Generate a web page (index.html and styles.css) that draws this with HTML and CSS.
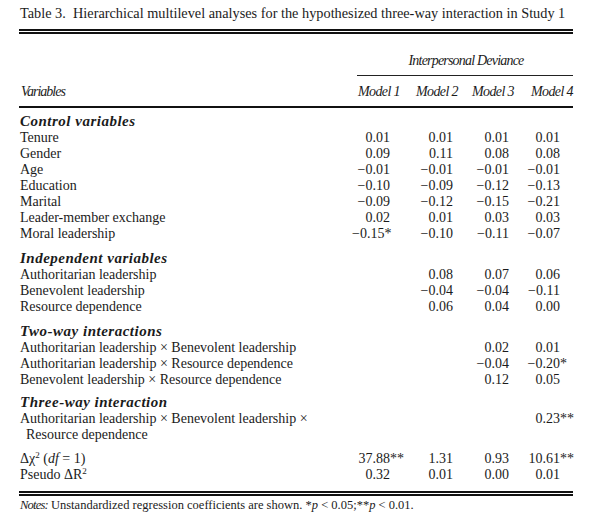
FILE: index.html
```html
<!DOCTYPE html>
<html>
<head>
<meta charset="utf-8">
<link rel="stylesheet" href="styles.css">
</head>
<body>
<div class="page">
  <div class="caption">Table 3.&nbsp; Hierarchical multilevel analyses for the hypothesized three-way interaction in Study 1</div>
  <div class="rule-double"></div>

  <div class="thead">
    <div class="cols spanrow">
      <div></div>
      <div class="spanner"><span>Interpersonal Deviance</span></div>
    </div>
    <div class="cols headrow">
      <div class="vars">Variables</div>
      <div class="mh">Model 1</div>
      <div class="mh">Model 2</div>
      <div class="mh">Model 3</div>
      <div class="mh">Model 4</div>
    </div>
  </div>

  <div class="tbody">
    <div class="group first">
      <div class="gh">Control variables</div>
      <div class="cols row"><div class="lab">Tenure</div><div class="n c1">0.01</div><div class="n c2">0.01</div><div class="n c3">0.01</div><div class="n c4">0.01</div></div>
      <div class="cols row"><div class="lab">Gender</div><div class="n c1">0.09</div><div class="n c2">0.11</div><div class="n c3">0.08</div><div class="n c4">0.08</div></div>
      <div class="cols row"><div class="lab">Age</div><div class="n c1">&minus;0.01</div><div class="n c2">&minus;0.01</div><div class="n c3">&minus;0.01</div><div class="n c4">&minus;0.01</div></div>
      <div class="cols row"><div class="lab">Education</div><div class="n c1">&minus;0.10</div><div class="n c2">&minus;0.09</div><div class="n c3">&minus;0.12</div><div class="n c4">&minus;0.13</div></div>
      <div class="cols row"><div class="lab">Marital</div><div class="n c1">&minus;0.09</div><div class="n c2">&minus;0.12</div><div class="n c3">&minus;0.15</div><div class="n c4">&minus;0.21</div></div>
      <div class="cols row"><div class="lab">Leader-member exchange</div><div class="n c1">0.02</div><div class="n c2">0.01</div><div class="n c3">0.03</div><div class="n c4">0.03</div></div>
      <div class="cols row"><div class="lab">Moral leadership</div><div class="n c1 tight">&minus;0.15<span class="sig">*</span></div><div class="n c2">&minus;0.10</div><div class="n c3">&minus;0.11</div><div class="n c4">&minus;0.07</div></div>
    </div>

    <div class="group">
      <div class="gh">Independent variables</div>
      <div class="cols row"><div class="lab">Authoritarian leadership</div><div class="n c1"></div><div class="n c2">0.08</div><div class="n c3">0.07</div><div class="n c4">0.06</div></div>
      <div class="cols row"><div class="lab">Benevolent leadership</div><div class="n c1"></div><div class="n c2">&minus;0.04</div><div class="n c3">&minus;0.04</div><div class="n c4">&minus;0.11</div></div>
      <div class="cols row"><div class="lab">Resource dependence</div><div class="n c1"></div><div class="n c2">0.06</div><div class="n c3">0.04</div><div class="n c4">0.00</div></div>
    </div>

    <div class="group">
      <div class="gh">Two-way interactions</div>
      <div class="cols row"><div class="lab">Authoritarian leadership &times; Benevolent leadership</div><div class="n c1"></div><div class="n c2"></div><div class="n c3">0.02</div><div class="n c4">0.01</div></div>
      <div class="cols row"><div class="lab">Authoritarian leadership &times; Resource dependence</div><div class="n c1"></div><div class="n c2"></div><div class="n c3">&minus;0.04</div><div class="n c4">&minus;0.20<span class="sig">*</span></div></div>
      <div class="cols row"><div class="lab">Benevolent leadership &times; Resource dependence</div><div class="n c1"></div><div class="n c2"></div><div class="n c3">0.12</div><div class="n c4">0.05</div></div>
    </div>

    <div class="group three">
      <div class="gh">Three-way interaction</div>
      <div class="cols row"><div class="lab">Authoritarian leadership &times; Benevolent leadership &times;</div><div class="n c1"></div><div class="n c2"></div><div class="n c3"></div><div class="n c4">0.23<span class="sig">**</span></div></div>
      <div class="cols row"><div class="lab indent">Resource dependence</div></div>
    </div>

    <div class="group stats">
      <div class="cols row"><div class="lab">&Delta;&chi;<sup>2</sup> (<i>df</i> = 1)</div><div class="n c1">37.88<span class="sig">**</span></div><div class="n c2">1.31</div><div class="n c3">0.93</div><div class="n c4">10.61<span class="sig">**</span></div></div>
      <div class="cols row"><div class="lab">Pseudo &Delta;R<sup>2</sup></div><div class="n c1">0.32</div><div class="n c2">0.01</div><div class="n c3">0.00</div><div class="n c4">0.01</div></div>
    </div>
  </div>

  <div class="rule-double bottom"></div>
  <p class="notes"><i class="nl">Notes:</i> Unstandardized regression coefficients are shown. *<i>p</i> &lt; 0.05;**<i>p</i> &lt; 0.01.</p>
</div>
</body>
</html>
```

FILE: styles.css
```css
html, body {
  margin: 0;
  padding: 0;
  background: #ffffff;
}

body {
  font-family: "Liberation Serif", "Times New Roman", serif;
  color: #1b1b1b;
  font-size: 14px;
}

.page {
  width: 554px;
  padding: 5px 0 0 19px;
}

.caption {
  font-size: 14.3px;
  line-height: 16px;
  white-space: nowrap;
  padding-left: 1px;
}

.rule-double {
  margin-top: 8px;
  height: 1px;
  border-top: 2px solid #111;
  border-bottom: 2px solid #111;
}

.rule-double.bottom {
  margin-top: 8px;
}

.cols {
  display: grid;
  grid-template-columns: 333px 48px 58px 56px 59px;
}

.thead {
  border-bottom: 2px solid #111;
}

.spanrow {
  margin-top: 19px;
}

.spanner {
  grid-column: 2 / 6;
  margin-left: 5px;
  border-bottom: 1px solid #222;
  text-align: center;
  font-style: italic;
  line-height: 16px;
  padding-bottom: 6px;
  padding-left: 2px;
  letter-spacing: -0.8px;
}

.headrow {
  padding-top: 8px;
  padding-bottom: 6px;
  line-height: 16px;
  font-style: italic;
}

.vars {
  letter-spacing: -1px;
  padding-left: 2px;
}

.mh {
  text-align: right;
  letter-spacing: -0.6px;
  white-space: nowrap;
}

.tbody {
  padding-top: 5px;
}

.group {
  margin-top: 8px;
}

.group.first {
  margin-top: 0;
}

.group.three {
  margin-top: 6px;
}

.gh {
  font-weight: bold;
  font-style: italic;
  font-size: 15px;
  line-height: 17px;
  letter-spacing: 0.5px;
  padding-left: 1px;
}

.row {
  line-height: 16px;
}

.lab {
  white-space: nowrap;
  padding-left: 1px;
}

.lab.indent {
  padding-left: 7px;
}

.n {
  text-align: right;
  white-space: nowrap;
}

.c1 { padding-right: 10px; }
.c2 { padding-right: 5px; }
.c3 { padding-right: 5px; }
.c4 { padding-right: 13px; }

.n.tight {
  padding-right: 17px;
}

.sig {
  display: inline-block;
  width: 0;
  text-align: left;
}

sup {
  font-size: 9px;
  line-height: 0;
  vertical-align: 5px;
}

.notes {
  margin: 1px 0 0 0;
  font-size: 12.5px;
  line-height: 16px;
  white-space: nowrap;
  padding-left: 1px;
}

.nl {
  letter-spacing: -0.8px;
}
```
